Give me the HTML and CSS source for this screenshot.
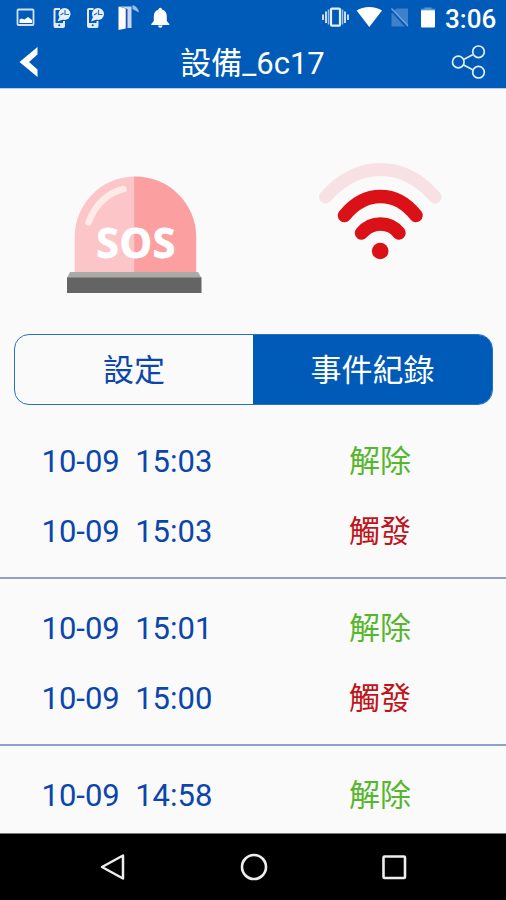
FILE: index.html
```html
<!DOCTYPE html>
<html lang="zh-Hant">
<head>
    <meta charset="UTF-8">
    <meta name="viewport" content="width=device-width, initial-scale=1.0">
    <title>設備_6c17</title>
    <link rel="stylesheet" href="styles.css">
</head>
<body>
    <div class="screen">
        <header class="top">
            <div class="status-bar">
                <svg class="status-left" width="180" height="36" viewBox="0 0 180 36">
                    <rect x="17.5" y="9.5" width="16" height="15.5" rx="1" fill="none" stroke="#d3e0f6" stroke-width="1.8"/>
                    <path d="M19.500 23v-3.500l2-1 3 1 3.500-2.500 4 3v3z" fill="#fff"/>
                    <g id="phone-alert">
                        <path d="M60 8.900h-4.500q-1 0-1 1v16q0 1 1 1h7.500q1 0 1-1V21" fill="none" stroke="#e0eafa" stroke-width="2"/>
                        <path d="M54.500 23h9.500v4.500h-9.500z" fill="#e0eafa"/>
                        <circle cx="59.200" cy="25.300" r="1" fill="#005bb8"/>
                        <circle cx="64.500" cy="14" r="6" fill="#e8f0fc"/>
                        <path d="M59.500 17l-2 4.500 5.500-2z" fill="#e8f0fc"/>
                        <path d="M65 10v4.500h4M60.500 15l3-2" fill="none" stroke="#2a72c4" stroke-width="1.200"/>
                    </g>
                    <use href="#phone-alert" x="33.500"/>
                    <path d="M119 6.500h12.500V28h-5V8.500z" fill="#c6d7f3"/>
                    <path d="M126.500 9v19" stroke="#2b50ad" stroke-width="2"/>
                    <path d="M118.500 6.500l7.200 2v20l-7.200 1.500z" fill="#fff"/>
                    <path d="M132.500 5q5.500 1.500 6.500 7.500l-6.500-3.500z" fill="#9dbbe8"/>
                    <path d="M160.300 7.800q1.600 0 1.800 1.800 4.700 1.500 4.700 7v4.500l2.500 2.800v1.100h-18v-1.100l2.500-2.800v-4.500q0-5.500 4.700-7 .2-1.800 1.800-1.800zM158 25.500h4.600q-.3 2.200-2.300 2.200t-2.300-2.200z" fill="#fff"/>
                </svg>
                <svg class="status-right" width="130" height="36" viewBox="0 0 130 36">
                    <path d="M8 14.500v5.500M11 11.500v11.500M30 11.500v11.500M33 14.500v5.500" stroke="#d3e1f7" stroke-width="1.900"/>
                    <path d="M13.500 9.500v15M27.500 9.500v15" stroke="#9dbfe9" stroke-width="1.500"/>
                    <rect x="16" y="8.700" width="9" height="17" rx="1" fill="none" stroke="#e6effc" stroke-width="2.200"/>
                    <path d="M54.300 27L41.600 10.500Q47 7 54.300 7t12.700 3.500z" fill="#fff"/>
                    <path d="M81.500 8.500H93v18H76.500V13.500z" fill="#3f80cb"/>
                    <path d="M76 9.500L92 26.800" stroke="#005bb8" stroke-width="2.600"/>
                    <path d="M76.500 8.500L93 26" stroke="#78a5de" stroke-width="1.300"/>
                    <path d="M106 10.500v-1.800h3.500V7.500h7v1.200h3.500v1.800z" fill="#5c97d6"/>
                    <rect x="106" y="10.300" width="14" height="17.200" rx=".8" fill="#fff"/>
                </svg>
                <span class="clock">3:06</span>
            </div>
            <div class="title-bar">
                <svg class="back" width="24" height="34" viewBox="0 0 24 34">
                    <path d="M19.500 2v7.500l-8.500 7.500 8.500 7.500v7.500L1.500 17z" fill="#fff"/>
                </svg>
                <h1>設備_6c17</h1>
                <svg class="share" width="38" height="38" viewBox="0 0 38 38">
                    <g fill="none" stroke="#e4edfb" stroke-width="1.700">
                        <path d="M13.200 16.700l9.500-5M13.200 21.700l9.500 5"/>
                        <circle cx="8.300" cy="19" r="5.800"/>
                        <circle cx="28.500" cy="8.800" r="5.800"/>
                        <circle cx="28.500" cy="29.200" r="5.800"/>
                    </g>
                </svg>
            </div>
        </header>

        <section class="device">
            <svg class="siren" width="136" height="120" viewBox="0 0 136 120">
                <path d="M8.700 98V62A60.500 60.500 0 0 1 69.200 1.500V98z" fill="#fcc5c7"/>
                <path d="M68.200 1.500h1A61 60.500 0 0 1 130.200 62v36h-62z" fill="#fb9fa1"/>
                <path d="M22.500 47.500Q33 20 57.500 14" fill="none" stroke="#ffeae5" stroke-width="6.500" stroke-linecap="round"/>
                <text x="69.800" y="82.500" text-anchor="middle" textLength="79" class="siren-text">SOS</text>
                <path d="M4 97h128l3.500 6H1z" fill="#aaaaa8"/>
                <rect x="1" y="102.500" width="134.500" height="15.500" fill="#646464"/>
            </svg>
            <svg class="signal" width="128" height="104" viewBox="0 0 128 104">
                <g fill="none" stroke-linecap="round">
                    <path d="M9.500 41Q34 13.500 64.500 13.500T119 41" stroke="#f7e1e4" stroke-width="13"/>
                    <path d="M28.500 59.500Q44 40.500 64.500 40.500T100 59.500" stroke="#da1217" stroke-width="13.500"/>
                    <path d="M45.500 77Q53 68 64.500 68T83 77" stroke="#da1217" stroke-width="13.500"/>
                </g>
                <circle cx="64.200" cy="95" r="8.300" fill="#da1217"/>
            </svg>
        </section>

        <nav class="tabs">
            <a class="tab">設定</a>
            <a class="tab active">事件紀錄</a>
        </nav>

        <main class="events">
            <div class="event-group">
                <div class="event"><span class="time">10-09  15:03</span><span class="state released">解除</span></div>
                <div class="event"><span class="time">10-09  15:03</span><span class="state triggered">觸發</span></div>
            </div>
            <div class="event-group">
                <div class="event"><span class="time">10-09  15:01</span><span class="state released">解除</span></div>
                <div class="event"><span class="time">10-09  15:00</span><span class="state triggered">觸發</span></div>
            </div>
            <div class="event-group">
                <div class="event"><span class="time">10-09  14:58</span><span class="state released">解除</span></div>
            </div>
        </main>

        <footer class="nav-bar">
            <svg width="28" height="32" viewBox="0 0 28 32">
                <path d="M24 4.500v23L3 16z" fill="none" stroke="#eee" stroke-width="2.500" stroke-linejoin="round"/>
            </svg>
            <svg width="28" height="32" viewBox="0 0 28 32">
                <circle cx="14" cy="16" r="12" fill="none" stroke="#eee" stroke-width="2.600"/>
            </svg>
            <svg width="28" height="32" viewBox="0 0 28 32">
                <rect x="3.500" y="5.500" width="21.500" height="21.500" rx="1" fill="none" stroke="#eee" stroke-width="2.600"/>
            </svg>
        </footer>
    </div>
</body>
</html>
```

FILE: styles.css
```css
* {
    box-sizing: border-box;
}
body {
    margin: 0;
    font-family: Roboto, 'Noto Sans CJK TC', sans-serif;
    background: #fafafa;
}
svg {
    display: block;
    flex: none;
}
.screen {
    width: 506px;
    height: 900px;
    display: flex;
    flex-direction: column;
    overflow: hidden;
}
.top {
    flex: none;
    height: 89px;
    background: #005bb8;
    border-bottom: 1px solid #b9cdea;
    color: #fff;
}
.status-bar {
    height: 36px;
    display: flex;
    align-items: center;
    padding-right: 11px;
}
.status-right {
    margin-left: auto;
}
.clock {
    font-size: 26px;
    font-weight: 500;
    line-height: 36px;
    width: 50px;
    padding-top: 2px;
    white-space: nowrap;
}
.title-bar {
    height: 52px;
    display: flex;
    align-items: center;
    justify-content: space-between;
    padding: 0 18px 0 18px;
}
h1 {
    margin: 0;
    font-size: 31px;
    font-weight: 400;
    line-height: 48px;
    padding: 4px 0 0 13px;
}
.device {
    flex: none;
    height: 245px;
    display: flex;
    justify-content: space-between;
    align-items: flex-start;
    padding: 67px 62px 0 66px;
}
.siren {
    margin-top: 19px;
}
.siren-text {
    font-family: 'Open Sans', sans-serif;
    font-size: 41px;
    font-weight: 700;
    fill: #fff;
    stroke: #fff;
    stroke-width: 0.8px;
}
.tabs {
    flex: none;
    height: 71px;
    margin: 0 13px 0 14px;
    display: flex;
    border: 1px solid #2a6fc0;
    border-radius: 15px;
    overflow: hidden;
}
.tab {
    width: 238px;
    font-size: 31px;
    line-height: 71px;
    text-align: center;
    color: #0c46ac;
}
.tab.active {
    flex: 1;
    background: #005bb8;
    color: #fff;
}
.events {
    flex: 1;
    min-height: 0;
    overflow: hidden;
    padding-top: 7px;
}
.event-group {
    height: 167px;
    padding-top: 15px;
    border-bottom: 2px solid #919fcd;
}
.event {
    display: flex;
    height: 69.5px;
    line-height: 69.5px;
    font-size: 31px;
    padding-left: 41.5px;
}
.time {
    width: 307.5px;
    white-space: pre;
    color: #0c46ac;
}
.released {
    color: #56b62d;
}
.triggered {
    color: #c0141a;
}
.nav-bar {
    flex: none;
    height: 67px;
    background: #000;
    border-top: 1px solid #777;
    display: flex;
    justify-content: space-between;
    align-items: center;
    padding: 0 98px 0 99px;
}
```
